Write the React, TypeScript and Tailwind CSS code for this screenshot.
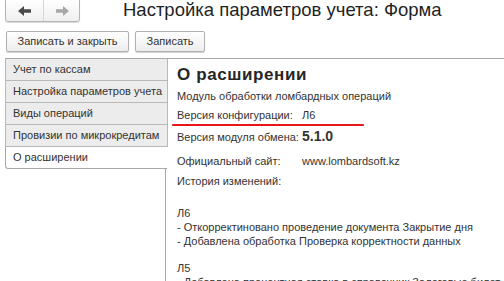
import React from "react";

const tabs = [
  "Учет по кассам",
  "Настройка параметров учета",
  "Виды операций",
  "Провизии по микрокредитам",
];

export default function App() {
  return (
    <div
      className="w-[504px] h-[281px] overflow-hidden bg-white text-[#333]"
      style={{ fontFamily: "Arial, 'Liberation Sans', sans-serif" }}
    >
      {/* Header */}
      <div className="flex items-start h-[31px]">
        <div className="ml-[5px] mt-[-1px] flex h-[23px] w-[75px] rounded-b-[3px] border border-[#b4b4b4] bg-gradient-to-b from-white to-[#efefef] shadow-[0_1px_1px_rgba(0,0,0,0.15)]">
          <div className="flex w-[38px] items-center justify-center border-r border-[#d6d6d6]">
            <svg width="14" height="10" viewBox="0 0 14 10">
              <path d="M0 5 L6 0 L6 3.2 L13 3.2 L13 6.8 L6 6.8 L6 10 Z" fill="#4a4a4a" />
            </svg>
          </div>
          <div className="flex flex-1 items-center justify-center">
            <svg width="14" height="10" viewBox="0 0 14 10">
              <path d="M14 5 L8 0 L8 3.2 L1 3.2 L1 6.8 L8 6.8 L8 10 Z" fill="#a8a8a8" />
            </svg>
          </div>
        </div>
        <div className="ml-[43px] mt-[-1px] text-[18.5px] leading-[22px] text-[#1f1f1f]">
          Настройка параметров учета: Форма
        </div>
      </div>

      {/* Buttons */}
      <div className="flex gap-[6px] pl-[6px] h-[27px]">
        <button className="h-[21px] rounded-[2px] border border-[#b0b0b0] bg-gradient-to-b from-white to-[#ededed] px-[10.5px] text-[11px] leading-[19px] text-[#333] shadow-[0_1px_1px_rgba(0,0,0,0.18)]">
          Записать и закрыть
        </button>
        <button className="h-[21px] rounded-[2px] border border-[#b0b0b0] bg-gradient-to-b from-white to-[#ededed] px-[10.5px] text-[11px] leading-[19px] text-[#333] shadow-[0_1px_1px_rgba(0,0,0,0.18)]">
          Записать
        </button>
      </div>

      {/* Tab panel */}
      <div className="ml-[5px] flex border-t border-[#a8a8a8]">
        <div className="w-[162px] shrink-0">
          {tabs.map((t) => (
            <div
              key={t}
              className="h-[22px] border-b border-l border-[#b8b8b8] bg-[#ececec] pl-[7px] text-[11px] leading-[21px] text-[#333] whitespace-nowrap"
            >
              {t}
            </div>
          ))}
          <div className="h-[22px] rounded-bl-[3px] border-b border-l border-[#a8a8a8] bg-white pl-[7px] text-[11px] leading-[21px] text-[#333]">
            О расширении
          </div>
        </div>
        <div className="flex-1 relative">
          <div className="absolute left-0 top-0 h-[88px] w-px bg-[#b8b8b8]" />
          <div className="absolute left-[-2px] top-[110px] bottom-[-200px] w-px bg-[#a8a8a8]" />
          <div className="pl-[10px] pt-[6px]">
            <div className="text-[17px] font-bold leading-[20px] text-[#262626] tracking-[0.6px]">
              О расширении
            </div>
            <div className="mt-[4px] text-[11px] leading-[14px]">
              Модуль обработки ломбардных операций
            </div>
            <div className="relative mt-[5px] text-[11px] leading-[14px]">
              Версия конфигурации:&nbsp;&nbsp;&nbsp;Л6
              <div className="absolute left-[-5px] top-[16px] h-[2px] w-[192px] rounded-full bg-[#e8151b]" />
            </div>
            <div className="mt-[6px] flex items-baseline text-[11px] leading-[16px]">
              <span className="w-[125px]">Версия модуля обмена:</span>
              <span className="text-[14px] font-bold text-[#333]">5.1.0</span>
            </div>
            <div className="mt-[9px] flex text-[11px] leading-[14px]">
              <span className="w-[125px]">Официальный сайт:</span>
              <span>www.lombardsoft.kz</span>
            </div>
            <div className="mt-[6px] text-[11px] leading-[14px]">История изменений:</div>
            <div className="mt-[19px] text-[11px] leading-[13.8px] whitespace-nowrap">
              <div>Л6</div>
              <div>- Откорректиновано проведение документа Закрытие дня</div>
              <div>- Добавлена обработка Проверка корректности данных</div>
              <div>&nbsp;</div>
              <div>Л5</div>
              <div>- Добавлена процентная ставка в справочник Залоговые билет</div>
            </div>
          </div>
        </div>
      </div>
    </div>
  );
}
